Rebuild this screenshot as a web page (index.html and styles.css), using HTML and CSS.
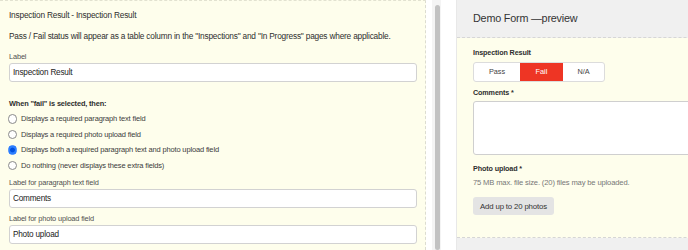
FILE: index.html
```html
<!DOCTYPE html>
<html lang="en">
<head>
  <meta charset="UTF-8">
  <meta name="viewport" content="width=device-width, initial-scale=1.0">
  <title>Inspection Result</title>
  <link rel="stylesheet" href="styles.css">
</head>
<body>
  <div class="editor">
    <p class="title">Inspection Result - Inspection Result</p>
    <p class="intro">Pass / Fail status will appear as a table column in the "Inspections" and "In Progress" pages where applicable.</p>

    <label class="field-label first">Label</label>
    <input class="text-input" type="text" value="Inspection Result">

    <p class="group-title">When "fail" is selected, then:</p>
    <label class="radio-row"><input type="radio" name="fail"> Displays a required paragraph text field</label>
    <label class="radio-row"><input type="radio" name="fail"> Displays a required photo upload field</label>
    <label class="radio-row"><input type="radio" name="fail" checked> Displays both a required paragraph text and photo upload field</label>
    <label class="radio-row"><input type="radio" name="fail"> Do nothing (never displays these extra fields)</label>

    <label class="field-label after-radios">Label for paragraph text field</label>
    <input class="text-input" type="text" value="Comments">

    <label class="field-label last">Label for photo upload field</label>
    <input class="text-input" type="text" value="Photo upload">
  </div>

  <div class="gutter">
    <div class="scroll-track"></div>
    <div class="scroll-thumb"></div>
  </div>

  <div class="preview">
    <div class="preview-header">Demo Form —preview</div>
    <div class="preview-body">
      <div class="preview-label">Inspection Result</div>
      <div class="segmented">
        <span class="seg">Pass</span>
        <span class="seg active">Fail</span>
        <span class="seg">N/A</span>
      </div>

      <div class="preview-label">Comments *</div>
      <textarea class="comments"></textarea>

      <div class="preview-label photo">Photo upload *</div>
      <div class="hint">75 MB max. file size. (20) files may be uploaded.</div>
      <button class="upload-btn">Add up to 20 photos</button>
    </div>
    <div class="preview-footer"></div>
  </div>
</body>
</html>
```

FILE: styles.css
```css
body {
  margin: 0;
  width: 688px;
  height: 250px;
  overflow: hidden;
  display: flex;
  background: #fff;
  color: #2e2e2e;
  font-family: 'Liberation Sans', Arial, sans-serif;
}
p {
  margin: 0;
}
.editor {
  flex: none;
  width: 408px;
  padding: 0 8px 0 9px;
  background: #fefeec;
  border-top: 1px dashed #e2e2d0;
  border-right: 1px dashed #dcdcd0;
  display: flex;
  flex-direction: column;
}
.title {
  font-size: 8.3px;
  letter-spacing: -0.2px;
  line-height: 12px;
  margin-top: 8px;
}
.intro {
  font-size: 8.3px;
  letter-spacing: -0.2px;
  line-height: 12px;
  margin-top: 9px;
}
.field-label {
  font-size: 7.4px;
  letter-spacing: -0.15px;
  line-height: 12px;
  color: #505050;
  margin-top: 6px;
}
.field-label.first {
  margin-top: 9px;
}
.field-label.after-radios {
  margin-top: 4px;
}
.field-label.last {
  margin-top: 5px;
}
.text-input {
  box-sizing: border-box;
  height: 19px;
  margin-top: 0;
  padding: 0 3px;
  border: 1px solid #d2d2d2;
  border-radius: 3px;
  background: #fff;
  color: #222;
  font-family: inherit;
  font-size: 8.2px;
  letter-spacing: -0.2px;
}
.group-title {
  font-size: 7.4px;
  letter-spacing: -0.15px;
  font-weight: bold;
  line-height: 12px;
  margin-top: 16px;
  margin-bottom: 1px;
}
.radio-row {
  display: flex;
  align-items: center;
  gap: 4px;
  height: 15.5px;
  margin-left: -1.5px;
  font-size: 7.5px;
  letter-spacing: -0.15px;
  color: #3c3c3c;
}
.radio-row input {
  appearance: none;
  margin: 0;
  width: 9.5px;
  height: 9.5px;
  border: 1px solid #8a8a8a;
  border-radius: 50%;
  background: #fff;
}
.radio-row input:checked {
  border-color: #2b7bff;
  background: radial-gradient(circle, #0050e0 0 2px, #2f80ff 2.8px);
}

.gutter {
  flex: none;
  width: 30px;
  position: relative;
}
.scroll-track {
  position: absolute;
  left: 6px;
  top: 0;
  bottom: 0;
  width: 9px;
  background: #f4f4f4;
}
.scroll-thumb {
  position: absolute;
  left: 9px;
  top: 5px;
  bottom: 0;
  width: 5px;
  border-radius: 2.5px;
  background: #c2c2c2;
}

.preview {
  flex: none;
  width: 300px;
  border-left: 1px solid #e8e8e8;
  display: flex;
  flex-direction: column;
}
.preview-header {
  height: 37px;
  padding-left: 16px;
  line-height: 36px;
  font-size: 10.8px;
  letter-spacing: -0.2px;
  color: #333;
  background: #f0f0f0;
  border-bottom: 1px dashed #d6d6d6;
}
.preview-body {
  height: 200px;
  padding: 9px 0 0 16px;
  box-sizing: border-box;
  background: #fefeec;
  border-bottom: 1px dashed #d6d6d6;
  display: flex;
  flex-direction: column;
  align-items: flex-start;
}
.preview-footer {
  flex: 1;
  background: #f0f0f0;
}
.preview-label {
  font-size: 7.2px;
  letter-spacing: -0.12px;
  font-weight: bold;
  line-height: 12px;
  color: #2e2e2e;
}
.segmented {
  display: flex;
  margin: 3px 0 5px;
  border: 1px solid #dcdcdc;
  border-radius: 3px;
  background: #fff;
  overflow: hidden;
}
.seg {
  height: 18px;
  line-height: 18px;
  font-size: 7.3px;
  text-align: center;
  color: #444;
}
.seg:nth-child(1) { width: 46px; }
.seg:nth-child(2) { width: 43px; }
.seg:nth-child(3) { width: 41px; }
.seg.active {
  background: #ee3524;
  color: #fff;
}
.comments {
  box-sizing: border-box;
  width: 300px;
  height: 54px;
  margin-top: 2px;
  border: 1px solid #cfcfcf;
  border-radius: 3px;
  background: #fff;
  resize: none;
}
.preview-label.photo {
  margin-top: 8px;
}
.hint {
  font-size: 7.6px;
  letter-spacing: -0.15px;
  line-height: 12px;
  color: #777;
  margin-top: 2px;
}
.upload-btn {
  margin-top: 8px;
  height: 18px;
  padding: 0 7px;
  border: none;
  border-radius: 3px;
  background: #e4e4e4;
  color: #333;
  font-family: inherit;
  font-size: 7.8px;
  letter-spacing: -0.15px;
}
```
